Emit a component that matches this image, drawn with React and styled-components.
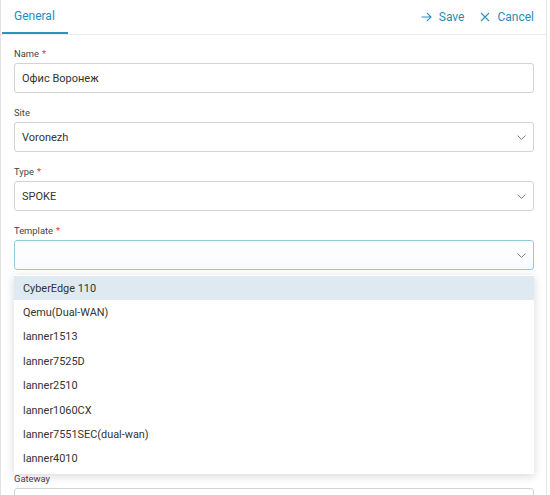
import styled, { createGlobalStyle } from "styled-components";

const GlobalStyle = createGlobalStyle`
  html, body {
    margin: 0;
    padding: 0;
    background: #ffffff;
    font-family: Roboto, "Liberation Sans", Arial, sans-serif;
    color: #333;
  }
  * { box-sizing: border-box; }
`;

const Panel = styled.div`
  width: 547px;
  min-height: 100vh;
  border-left: 1px solid #e2e2e2;
  border-right: 1px solid #e6e6e6;
  overflow: hidden;
`;

const Header = styled.div`
  display: flex;
  align-items: stretch;
  justify-content: space-between;
  height: 35px;
  border-bottom: 1px solid #ececec;
`;

const Tab = styled.div`
  display: flex;
  align-items: center;
  margin-left: 1px;
  padding: 0 12px;
  width: 66px;
  font-size: 12px;
  color: #1f8db3;
  border-bottom: 2px solid ${(p) => (p.$active ? "#2a95bb" : "transparent")};
`;

const Actions = styled.div`
  display: flex;
  align-items: center;
  gap: 16px;
  padding-right: 12px;
`;

const ActionButton = styled.button`
  display: flex;
  align-items: center;
  gap: 7px;
  padding: 0;
  border: 0;
  background: none;
  font-family: inherit;
  font-size: 12px;
  color: #1f8db3;
  cursor: pointer;
`;

const Form = styled.div`
  padding: 12px 12px 0 13px;
`;

const Field = styled.div`
  margin-bottom: 13px;
`;

const Label = styled.div`
  font-size: 9.4px;
  line-height: 14px;
  margin-bottom: 2px;
  color: #444;
`;

const Required = styled.span`
  color: #e0383a;
  margin-left: 3px;
`;

const ControlWrap = styled.div`
  position: relative;
`;

const Box = styled.div`
  display: flex;
  align-items: center;
  justify-content: space-between;
  height: ${(p) => p.$height || 30}px;
  padding: 0 7px 0 7px;
  border: 1px solid ${(p) => (p.$focused ? "#8fcbda" : "#d3d3d3")};
  border-radius: 3px;
  background: ${(p) =>
    p.$focused ? "linear-gradient(#ffffff, #f7fbfd)" : "#ffffff"};
  font-size: 11px;
  color: #333;
`;

const Menu = styled.div`
  position: absolute;
  top: calc(100% + 5px);
  left: 0;
  right: 0;
  z-index: 10;
  padding: 1px 0 3px;
  background: #ffffff;
  box-shadow: 0 2px 9px rgba(0, 0, 0, 0.16);
`;

const Option = styled.div`
  display: flex;
  align-items: center;
  height: 24.4px;
  padding-left: 9px;
  font-size: 10.9px;
  color: #333;
  background: ${(p) => (p.$highlighted ? "#dfe9f1" : "transparent")};
`;

const Chevron = () => (
  <svg width="9" height="5" viewBox="0 0 9 5">
    <polyline points="0.6,0.5 4.5,4.4 8.4,0.5" fill="none" stroke="#777" strokeWidth="1" />
  </svg>
);

const ArrowIcon = () => (
  <svg width="11" height="10" viewBox="0 0 11 10">
    <path d="M0.5 5 H10 M5.8 0.8 L10 5 L5.8 9.2" fill="none" stroke="#2a95bb" strokeWidth="1.1" />
  </svg>
);

const CloseIcon = () => (
  <svg width="10" height="10" viewBox="0 0 10 10">
    <path d="M1 1 L9 9 M9 1 L1 9" fill="none" stroke="#2a95bb" strokeWidth="1.1" />
  </svg>
);

const templates = [
  "CyberEdge 110",
  "Qemu(Dual-WAN)",
  "lanner1513",
  "lanner7525D",
  "lanner2510",
  "lanner1060CX",
  "lanner7551SEC(dual-wan)",
  "lanner4010",
];

const fields = [
  { label: "Name", required: true, value: "Офис Воронеж" },
  { label: "Site", select: true, value: "Voronezh" },
  { label: "Type", required: true, select: true, value: "SPOKE" },
  { label: "Template", required: true, select: true, value: "", open: true },
  { label: "Location", value: "" },
  { label: "Serial number", value: "" },
  { label: "Description", value: "", height: 42 },
  { label: "Gateway", select: true, value: "" },
];

export default function App() {
  return (
    <>
      <GlobalStyle />
      <Panel>
        <Header>
          <Tab $active>General</Tab>
          <Actions>
            <ActionButton>
              <ArrowIcon />
              Save
            </ActionButton>
            <ActionButton>
              <CloseIcon />
              Cancel
            </ActionButton>
          </Actions>
        </Header>
        <Form>
          {fields.map((f) => (
            <Field key={f.label}>
              <Label>
                {f.label}
                {f.required && <Required>*</Required>}
              </Label>
              <ControlWrap>
                <Box $focused={f.open} $height={f.height}>
                  <span>{f.value}</span>
                  {f.select && <Chevron />}
                </Box>
                {f.open && (
                  <Menu>
                    {templates.map((t, i) => (
                      <Option key={t} $highlighted={i === 0}>
                        {t}
                      </Option>
                    ))}
                  </Menu>
                )}
              </ControlWrap>
            </Field>
          ))}
        </Form>
      </Panel>
    </>
  );
}
